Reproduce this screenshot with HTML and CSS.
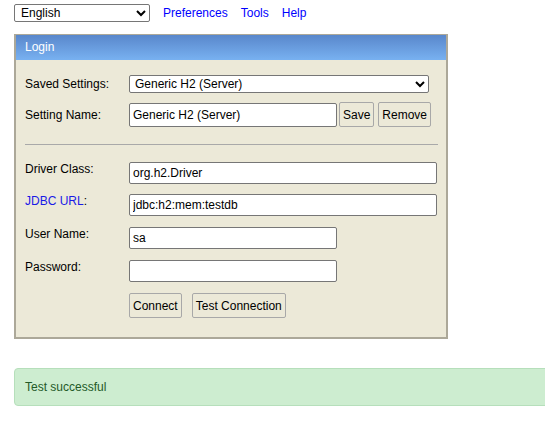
FILE: index.html
```html
<!DOCTYPE html>
<html>
<head>
<meta charset="utf-8">
<link rel="stylesheet" href="styles.css">
</head>
<body>
<div class="toolbar">
  <select class="lang"><option>English</option></select>
  <a class="nav" href="#">Preferences</a>
  <a class="nav" href="#">Tools</a>
  <a class="nav" href="#">Help</a>
</div>

<div class="panel">
  <div class="panel-head">Login</div>
  <div class="panel-body">
    <div class="row row-center first">
      <span class="label">Saved Settings:</span>
      <select class="field field-select"><option>Generic H2 (Server)</option></select>
    </div>
    <div class="row row-center gap9">
      <span class="label">Setting Name:</span>
      <input class="field field-short field-tall" type="text" value="Generic H2 (Server)">
      <button class="btn btn-save">Save</button>
      <button class="btn btn-remove">Remove</button>
    </div>
    <div class="divider"></div>
    <div class="row gap17">
      <span class="label">Driver Class:</span>
      <input class="field field-long" type="text" value="org.h2.Driver">
    </div>
    <div class="row gap10">
      <span class="label"><a class="link" href="#">JDBC URL</a>:</span>
      <input class="field field-long" type="text" value="jdbc:h2:mem:testdb">
    </div>
    <div class="row gap11">
      <span class="label">User Name:</span>
      <input class="field field-short" type="text" value="sa">
    </div>
    <div class="row gap11">
      <span class="label">Password:</span>
      <input class="field field-short" type="password" value="">
    </div>
    <div class="row gap11 actions">
      <button class="btn">Connect</button>
      <button class="btn btn-test">Test Connection</button>
    </div>
  </div>
</div>

<div class="alert">Test successful</div>
</body>
</html>
```

FILE: styles.css
```css
html {
  overflow-x: hidden;
}
body {
  margin: 0;
  font-family: "Liberation Sans", Arial, sans-serif;
  font-size: 12px;
  color: #000;
  background: #fff;
}
.toolbar {
  display: flex;
  align-items: center;
  gap: 13px;
  padding: 4px 0 0 14px;
  height: 18px;
}
.lang {
  width: 136px;
  height: 18px;
  font-family: "Liberation Sans", Arial, sans-serif;
  font-size: 12px;
  margin: 0;
  padding: 0 0 0 2px;
  border: 1px solid #767676;
  border-radius: 2px;
  background: #fff;
  color: #000;
}
.nav {
  color: #0000ff;
  text-decoration: none;
  font-size: 12px;
}
.panel {
  margin: 12px 0 0 14px;
  width: 430px;
  background: #ece9d8;
  border: 2px solid #aca899;
  border-top-width: 1px;
}
.panel-head {
  height: 25px;
  line-height: 25px;
  padding-left: 9px;
  color: #fff;
  background: linear-gradient(to bottom, #5987cb, #78b1f1);
}
.panel-body {
  padding: 15px 8px 19px 9px;
}
.row {
  display: flex;
  align-items: flex-start;
}
.row-center {
  align-items: center;
}
.gap9 { margin-top: 9px; }
.gap10 { margin-top: 10px; }
.gap11 { margin-top: 11px; }
.gap17 { margin-top: 17px; }
.label {
  width: 104px;
  flex: none;
  line-height: 14px;
}
.link {
  color: #1a1ae6;
  text-decoration: none;
}
.field {
  box-sizing: border-box;
  height: 22px;
  margin: 0;
  padding: 0 3px;
  font-family: "Liberation Sans", Arial, sans-serif;
  font-size: 12px;
  color: #000;
  background: #fff;
  border: 1px solid #767676;
  border-radius: 2px;
}
.field-select {
  width: 300px;
  height: 18px;
  padding: 0 0 0 1px;
}
.field-short { width: 208px; }
.field-long { width: 308px; }
.field-tall { height: 24px; }
.btn {
  box-sizing: border-box;
  height: 25px;
  margin: 0;
  padding: 0 3px;
  font-family: "Liberation Sans", Arial, sans-serif;
  font-size: 12px;
  color: #000;
  background: #ece9d8;
  border: 1px solid #a8a8a8;
  border-radius: 2px;
}
.btn-save { margin-left: 2px; }
.btn-remove { margin-left: 4px; }
.btn-test { margin-left: 10px; }
.actions {
  padding-left: 104px;
}
.divider {
  margin-top: 17px;
  border-top: 1px solid #a9a9a9;
}
.alert {
  margin: 29px -20px 0 14px;
  height: 36px;
  line-height: 36px;
  padding-left: 10px;
  background: #cdedd0;
  border: 1px solid #b6dfbb;
  border-radius: 4px;
  color: #245a28;
}
```
